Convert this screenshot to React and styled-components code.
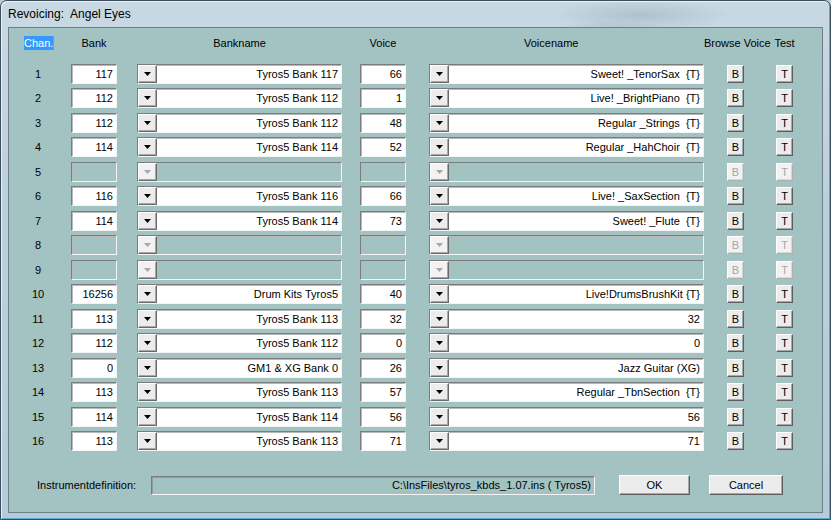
import React from "react";
import styled, { createGlobalStyle, css } from "styled-components";

const Global = createGlobalStyle`
  html, body { margin: 0; padding: 0; background: #b9ccd8; }
  body { width: 831px; height: 520px; overflow: hidden; }
  * { box-sizing: border-box; }
`;

const UI = `"Liberation Sans", Arial, sans-serif`;

const Window = styled.div`
  width: 831px;
  height: 520px;
  display: flex;
  flex-direction: column;
  border: 1px solid #3b4c5a;
  border-radius: 7px 7px 0 0;
  background:
    radial-gradient(ellipse 90px 16px at 640px 14px, rgba(120,140,150,0.3), transparent),
    radial-gradient(ellipse 60px 10px at 610px 30px, rgba(110,130,140,0.25), transparent),
    linear-gradient(180deg, #c9d9e4 0%, #bccfdc 40%, #b6cbd9 100%);
  box-shadow: inset 1px 1px 0 rgba(255,255,255,0.7), inset -1px -1px 0 #5fa8cf;
  overflow: hidden;
`;

const TitleBar = styled.div`
  height: 26px;
  display: flex;
  align-items: center;
  padding-left: 7px;
  font-family: "Liberation Sans", Arial, sans-serif;
  font-size: 12px;
  color: #000;
  white-space: pre;
`;

const Client = styled.div`
  flex: 1;
  margin: 0 7px 6px 7px;
  border: 1px solid #6e7f8a;
  background: #a3c3c3;
  padding: 6px 0 0 15px;
  font-family: ${UI};
  font-size: 11px;
  color: #000;
  display: flex;
  flex-direction: column;
`;

const Row = styled.div`
  display: flex;
  align-items: center;
  height: ${(p) => (p.$header ? "18px" : "24.47px")};
  margin-bottom: ${(p) => (p.$header ? "9.77px" : "0")};
  white-space: pre;
`;

const HeadCell = styled.div`
  width: ${(p) => p.$w}px;
  flex: none;
  text-align: ${(p) => p.$align || "center"};
  padding-left: ${(p) => p.$pl || 0}px;
`;

const Selected = styled.span`
  background: #3399ff;
  color: #fff;
  padding: 1px 0 1px 0;
  border-right: 1px solid #e8821e;
`;

const ChanCell = styled.div`
  width: 28px;
  flex: none;
  text-align: center;
`;

const sunken = css`
  border: 1px solid;
  border-color: #7c7c7c #f4f4f4 #f4f4f4 #7c7c7c;
  box-shadow: inset 1px 1px 0 #b8b8b8;
`;

const Field = styled.div`
  ${sunken};
  flex: none;
  width: ${(p) => p.$w}px;
  height: 20px;
  margin-left: ${(p) => p.$ml}px;
  background: ${(p) => (p.$disabled ? "transparent" : "#fff")};
  text-align: right;
  padding: 0 3px 0 2px;
  line-height: 18px;
  overflow: hidden;
`;

const Combo = styled.div`
  ${sunken};
  flex: none;
  display: flex;
  width: ${(p) => p.$w}px;
  height: 20px;
  margin-left: ${(p) => p.$ml}px;
  background: ${(p) => (p.$disabled ? "transparent" : "#fff")};
`;

const DropButton = styled.div`
  flex: none;
  width: 19px;
  height: 18px;
  display: flex;
  align-items: center;
  justify-content: center;
  background: ${(p) => (p.$disabled ? "#f2f2f2" : "#ececec")};
  border: 1px solid;
  border-color: #fff #6a6a6a #6a6a6a #fff;
  box-shadow: inset -1px -1px 0 #a8a8a8;
  color: ${(p) => (p.$disabled ? "#a6a6a6" : "#000")};
`;

const ComboText = styled.div`
  flex: 1;
  text-align: right;
  padding-right: 3px;
  line-height: 18px;
  overflow: hidden;
`;

const ButtonSlot = styled.div`
  width: ${(p) => p.$w}px;
  flex: none;
  display: flex;
  justify-content: center;
`;

const SmallButton = styled.div`
  width: 17px;
  height: 18px;
  display: flex;
  align-items: center;
  justify-content: center;
  background: ${(p) => (p.$disabled ? "#f2f2f2" : "#ececec")};
  color: ${(p) => (p.$disabled ? "#a6a6a6" : "#000")};
  border: 1px solid;
  border-color: ${(p) =>
    p.$disabled ? "#fff #b0b0b0 #b0b0b0 #fff" : "#fff #5e5e5e #5e5e5e #fff"};
  box-shadow: inset -1px -1px 0 ${(p) => (p.$disabled ? "#d8d8d8" : "#a8a8a8")};
`;

const BottomBar = styled.div`
  display: flex;
  align-items: center;
  height: 20px;
  margin-top: 22px;
  padding-left: 13px;
  white-space: pre;
`;

const Label = styled.div`
  width: 114px;
  flex: none;
`;

const PathField = styled.div`
  ${sunken};
  width: 444px;
  height: 19px;
  flex: none;
  text-align: right;
  padding-right: 3px;
  line-height: 17px;
  box-shadow: inset 1px 1px 0 #8e9e9e;
`;

const PushButton = styled.div`
  width: ${(p) => p.$w}px;
  margin-left: ${(p) => p.$ml}px;
  height: 20px;
  flex: none;
  display: flex;
  align-items: center;
  justify-content: center;
  background: #ececec;
  border: 1px solid;
  border-color: #fff #5e5e5e #5e5e5e #fff;
  box-shadow: inset -1px -1px 0 #a8a8a8;
`;

const Arrow = () => (
  <svg width="7" height="4" viewBox="0 0 7 4">
    <path d="M0 0h7L3.5 4z" fill="currentColor" />
  </svg>
);

const rows = [
  ["117", "Tyros5 Bank 117", "66", "Sweet! _TenorSax  {T}"],
  ["112", "Tyros5 Bank 112", "1", "Live! _BrightPiano  {T}"],
  ["112", "Tyros5 Bank 112", "48", "Regular _Strings  {T}"],
  ["114", "Tyros5 Bank 114", "52", "Regular _HahChoir  {T}"],
  null,
  ["116", "Tyros5 Bank 116", "66", "Live! _SaxSection  {T}"],
  ["114", "Tyros5 Bank 114", "73", "Sweet! _Flute  {T}"],
  null,
  null,
  ["16256", "Drum Kits Tyros5", "40", "Live!DrumsBrushKit {T}"],
  ["113", "Tyros5 Bank 113", "32", "32"],
  ["112", "Tyros5 Bank 112", "0", "0"],
  ["0", "GM1 & XG Bank 0", "26", "Jazz Guitar (XG)"],
  ["113", "Tyros5 Bank 113", "57", "Regular _TbnSection  {T}"],
  ["114", "Tyros5 Bank 114", "56", "56"],
  ["113", "Tyros5 Bank 113", "71", "71"],
];

function ChannelRow({ n, data }) {
  const d = !data;
  const [bank, bankName, voice, voiceName] = data || ["", "", "", ""];
  return (
    <Row>
      <ChanCell>{n}</ChanCell>
      <Field $w={46} $ml={19} $disabled={d}>{bank}</Field>
      <Combo $w={205} $ml={20} $disabled={d}>
        <DropButton $disabled={d}><Arrow /></DropButton>
        <ComboText>{bankName}</ComboText>
      </Combo>
      <Field $w={46} $ml={18} $disabled={d}>{voice}</Field>
      <Combo $w={275} $ml={23} $disabled={d}>
        <DropButton $disabled={d}><Arrow /></DropButton>
        <ComboText>{voiceName}</ComboText>
      </Combo>
      <ButtonSlot $w={63}><SmallButton $disabled={d}>B</SmallButton></ButtonSlot>
      <ButtonSlot $w={35}><SmallButton $disabled={d}>T</SmallButton></ButtonSlot>
    </Row>
  );
}

export default function App() {
  return (
    <>
      <Global />
      <Window>
        <TitleBar>Revoicing:  Angel Eyes</TitleBar>
        <Client>
          <Row $header>
            <HeadCell $w={47} $align="left"><Selected>Chan.</Selected></HeadCell>
            <HeadCell $w={46}>Bank</HeadCell>
            <HeadCell $w={225} $pl={20}>Bankname</HeadCell>
            <HeadCell $w={64} $pl={18}>Voice</HeadCell>
            <HeadCell $w={298} $align="left" $pl={118}>Voicename</HeadCell>
            <HeadCell $w={63}>Browse Voice</HeadCell>
            <HeadCell $w={35}>Test</HeadCell>
          </Row>
          {rows.map((r, i) => (
            <ChannelRow key={i} n={i + 1} data={r} />
          ))}
          <BottomBar>
            <Label>Instrumentdefinition:</Label>
            <PathField>C:\InsFiles\tyros_kbds_1.07.ins ( Tyros5)</PathField>
            <PushButton $w={71} $ml={24}>OK</PushButton>
            <PushButton $w={74} $ml={19}>Cancel</PushButton>
          </BottomBar>
        </Client>
      </Window>
    </>
  );
}
